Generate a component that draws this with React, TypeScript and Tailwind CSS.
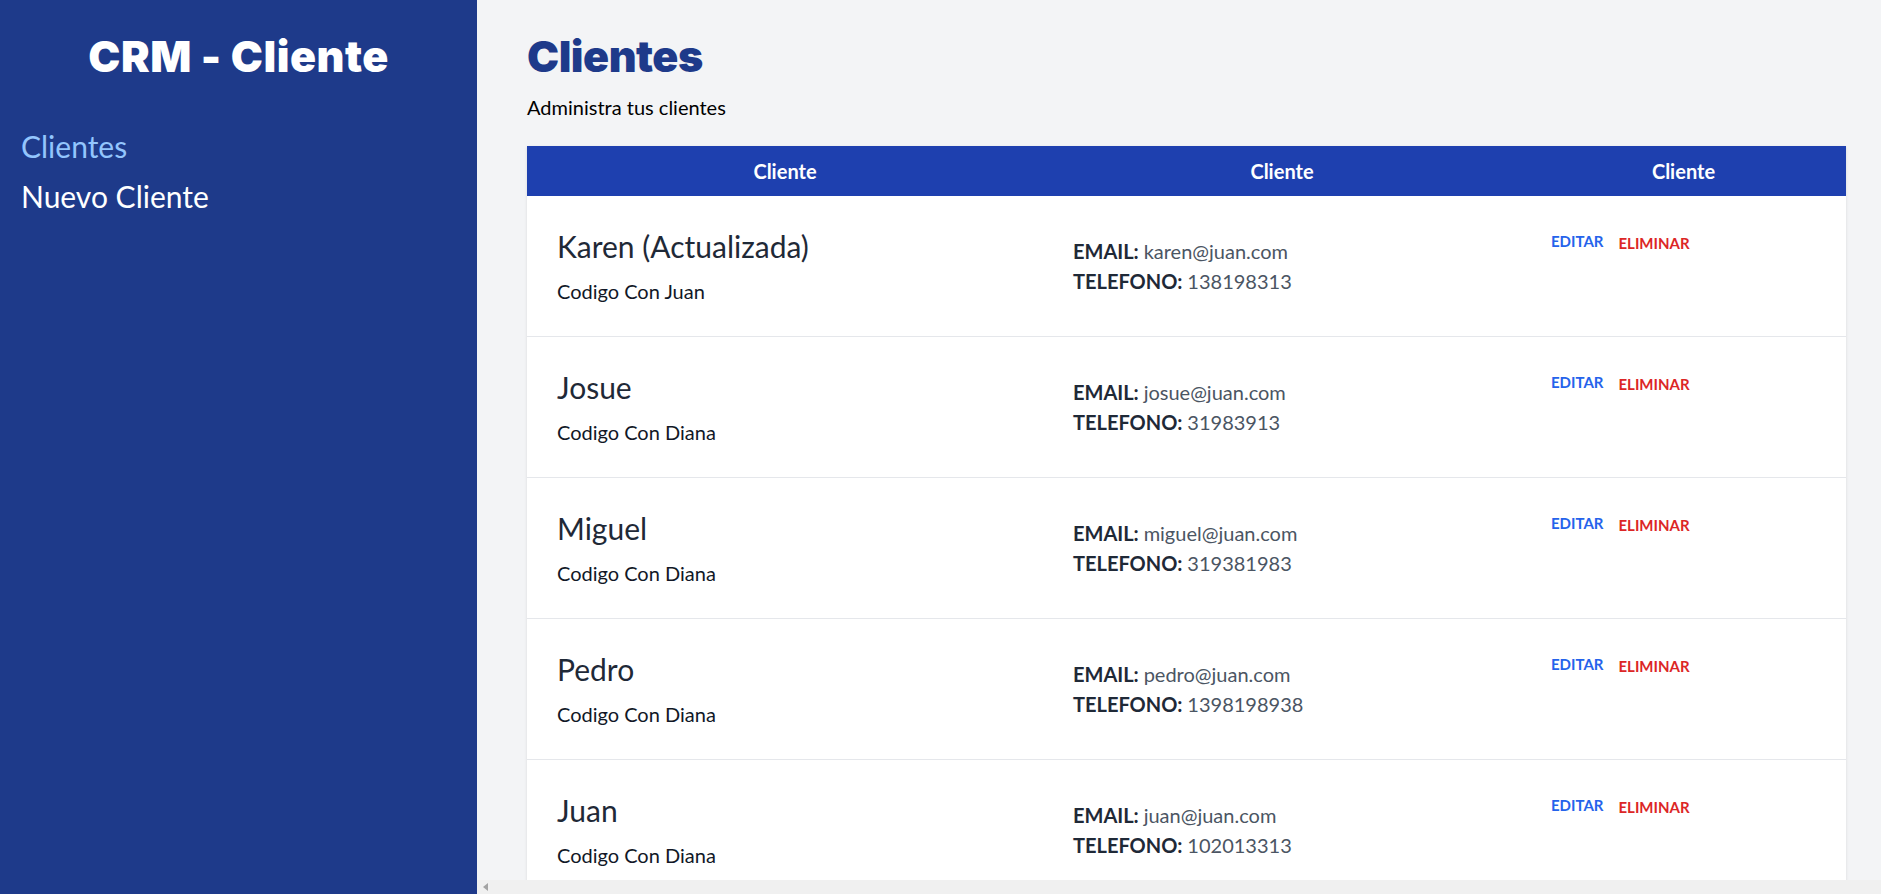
import React from 'react';

const CLIENTES = [
  { nombre: 'Karen (Actualizada)', empresa: 'Codigo Con Juan', email: 'karen@juan.com', telefono: '138198313' },
  { nombre: 'Josue', empresa: 'Codigo Con Diana', email: 'josue@juan.com', telefono: '31983913' },
  { nombre: 'Miguel', empresa: 'Codigo Con Diana', email: 'miguel@juan.com', telefono: '319381983' },
  { nombre: 'Pedro', empresa: 'Codigo Con Diana', email: 'pedro@juan.com', telefono: '1398198938' },
  { nombre: 'Juan', empresa: 'Codigo Con Diana', email: 'juan@juan.com', telefono: '102013313' },
];

const Sidebar = () => (
  <aside className="h-screen w-[477px] shrink-0 bg-[#1e3a8a] px-[21px] pt-[31px]">
    <h1 className="text-center font-['Inter',sans-serif] text-[43px] leading-[50px] font-black tracking-[0.5px] text-white">
      CRM - Cliente
    </h1>
    <nav className="mt-[45px] flex flex-col gap-[10px]">
      <a href="#" className="text-[30px] leading-[40px] text-[#93c5fd]">
        Clientes
      </a>
      <a href="#" className="text-[30px] leading-[40px] text-white">
        Nuevo Cliente
      </a>
    </nav>
  </aside>
);

const FilaCliente = ({ nombre, empresa, email, telefono }: (typeof CLIENTES)[number]) => (
  <tr className="border-b border-[#e5e7eb]">
    <td className="p-[30px] align-middle">
      <p className="text-[30px] leading-[40px] text-[#1f2937]">{nombre}</p>
      <p className="mt-[10px] text-[20px] leading-[30px] text-[#111827]">{empresa}</p>
    </td>
    <td className="p-[30px] align-middle text-[20px] leading-[30px]">
      <p className="text-[#4b5563]">
        <span className="font-bold text-[#1f2937]">EMAIL: </span>
        {email}
      </p>
      <p className="text-[#4b5563]">
        <span className="font-bold text-[#1f2937]">TELEFONO: </span>
        {telefono}
      </p>
    </td>
    <td className="px-[30px] pt-[35px] align-top">
      <div className="flex items-start gap-[15px] text-[15px] leading-[20px] font-bold">
        <button type="button" className="text-[#2563eb]">
          EDITAR
        </button>
        <button type="button" className="mt-[2px] text-[#dc2626]">
          ELIMINAR
        </button>
      </div>
    </td>
  </tr>
);

export default function App() {
  return (
    <div className="flex h-screen overflow-hidden font-['Lato',sans-serif] text-black">
      <Sidebar />
      <main className="flex h-screen min-w-0 flex-1 flex-col bg-[#f3f4f6]">
        <div className="min-h-0 flex-1 overflow-hidden pt-[31px] pr-[35px] pl-[50px]">
          <h2 className="font-['Inter',sans-serif] text-[43px] leading-[50px] font-black tracking-[-0.5px] text-[#1e3a8a]">
            Clientes
          </h2>
          <p className="mt-[11px] text-[20px] leading-[30px]">Administra tus clientes</p>

          <table className="mt-[24px] w-full table-fixed bg-white shadow">
            <thead className="bg-[#1e40af] text-white">
              <tr>
                <th className="w-[516px] p-[10px] text-[20px] leading-[30px] font-bold">Cliente</th>
                <th className="w-[478px] p-[10px] text-[20px] leading-[30px] font-bold">Cliente</th>
                <th className="p-[10px] text-[20px] leading-[30px] font-bold">Cliente</th>
              </tr>
            </thead>
            <tbody>
              {CLIENTES.map((c) => (
                <FilaCliente key={c.email} {...c} />
              ))}
            </tbody>
          </table>
        </div>

        {/* barra de desplazamiento horizontal */}
        <div className="flex h-[14px] shrink-0 items-center bg-[#f0f0f0] pl-[6px]">
          <svg width="6" height="8" viewBox="0 0 6 8">
            <path d="M5 0 L0 4 L5 8 Z" fill="#a3a3a3" />
          </svg>
        </div>
      </main>
    </div>
  );
}
